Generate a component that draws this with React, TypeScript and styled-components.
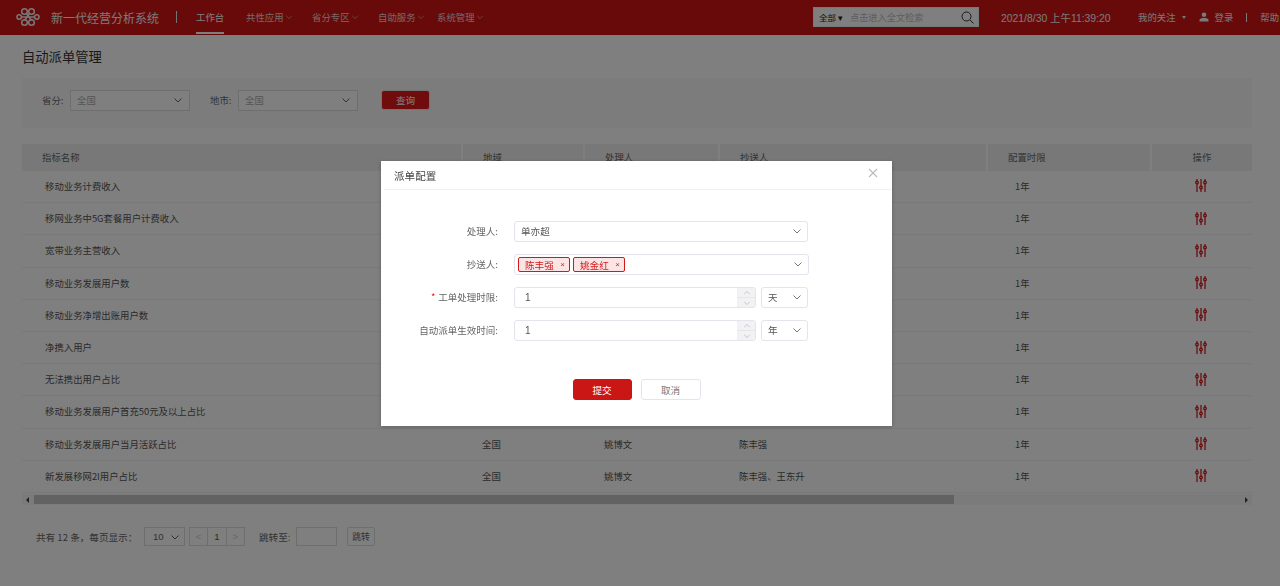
import styled, { createGlobalStyle } from 'styled-components';

const GlobalStyle = createGlobalStyle`
  html, body {
    margin: 0;
    height: 586px;
    overflow: hidden;
    background: #fff;
    font-family: "Noto Sans CJK SC", "Noto Sans", sans-serif;
    font-size: 10px;
    color: #555;
  }
  * { box-sizing: border-box; }
`;

const Header = styled.header`
  height: 35px;
  background: #d01414;
  border-bottom: 1px solid #c61212;
  display: flex;
  align-items: center;
  color: #fff;
  padding-left: 16px;
`;

const SystemName = styled.div`
  font-size: 12px;
  margin-left: 11px;
  width: 109px;
  white-space: nowrap;
  color: #f4f4f4;
`;

const HeaderDivider = styled.span`
  width: 1px;
  height: 12px;
  background: #e8e8e8;
  margin: 0 19px 0 16px;
`;

const Nav = styled.nav`
  display: flex;
  height: 100%;
  width: 617px;
`;

const NavItem = styled.a<{ $width: number; $active?: boolean }>`
  width: ${({ $width }) => $width}px;
  height: 100%;
  display: flex;
  align-items: center;
  gap: 1px;
  font-size: 9.4px;
  white-space: nowrap;
  color: ${({ $active }) => ($active ? '#fff' : '#f0d0d0')};
  position: relative;

  &::after {
    content: '';
    display: ${({ $active }) => ($active ? 'block' : 'none')};
    position: absolute;
    left: 0;
    top: 32px;
    width: 28px;
    height: 2px;
    background: #fff;
  }
`;

const SearchBox = styled.div`
  width: 166px;
  height: 20px;
  background: #fff;
  border: 1px solid #e4f4f4;
  display: flex;
  align-items: center;
  padding: 0 4px 0 5px;
  font-size: 8.5px;
  color: #222;
`;

const SearchScope = styled.span`
  width: 31px;
  white-space: nowrap;
`;

const SearchHint = styled.span`
  flex: 1;
  font-size: 9.2px;
  color: #bbb;
  white-space: nowrap;
`;

const Clock = styled.div`
  margin-left: 22px;
  width: 137px;
  font-family: "Liberation Sans", "Noto Sans CJK SC", sans-serif;
  font-size: 10.4px;
  white-space: nowrap;
  color: #f4f4f4;
`;

const HeaderLink = styled.span<{ $gap?: number }>`
  margin-left: ${({ $gap }) => $gap ?? 0}px;
  font-size: 9.4px;
  white-space: nowrap;
  color: #f4f4f4;
`;

const Caret = styled.span`
  width: 0;
  height: 0;
  margin: 0 13px 0 6px;
  border-left: 2.5px solid transparent;
  border-right: 2.5px solid transparent;
  border-top: 3px solid #f0f0f0;
`;

const LinkSeparator = styled.span`
  width: 1px;
  height: 9px;
  background: #f4f4f4;
  margin: 0 13px 0 13px;
`;

const Main = styled.main`
  padding: 0 27px 0 22px;
`;

const PageTitle = styled.h1`
  margin: 0;
  height: 43px;
  padding-bottom: 1px;
  display: flex;
  align-items: center;
  font-size: 13.3px;
  font-weight: 400;
  color: #333;
`;

const FilterPanel = styled.section`
  height: 50px;
  width: 1230px;
  background: #f8f8f8;
  display: flex;
  align-items: center;
  padding: 0 0 6px 20px;
`;

const FilterLabel = styled.label`
  width: 28px;
  font-size: 9.4px;
  color: #666;
  white-space: nowrap;
`;

const FilterSelect = styled.div`
  width: 120px;
  height: 21px;
  margin-right: 20px;
  border: 1px solid #ddd;
  background: #fff;
  display: flex;
  align-items: center;
  justify-content: space-between;
  padding: 0 6px;
  font-size: 9.4px;
  color: #aaa;
`;

const QueryButton = styled.button`
  width: 49px;
  height: 20px;
  margin-left: 3px;
  border: 1px solid #e6e6e6;
  border-radius: 3px;
  background: #e01818;
  color: #fff;
  font: inherit;
  font-size: 9.6px;
  padding: 0;
`;

const TableWrap = styled.div`
  width: 1230px;
  margin-top: 16px;
`;

const Table = styled.table`
  width: 1230px;
  border-collapse: collapse;
  table-layout: fixed;
`;

const HeadCell = styled.th<{ $center?: boolean }>`
  height: 26.5px;
  padding: 0 0 1px ${({ $center }) => ($center ? 0 : 20)}px;
  background: #f0f0f0;
  border-right: 2px solid #fff;
  font-size: 9.4px;
  font-weight: 400;
  color: #666;
  text-align: ${({ $center }) => ($center ? 'center' : 'left')};

  &:last-child { border-right: 0; }
`;

const Cell = styled.td<{ $indent?: number }>`
  height: 32.2px;
  padding: 0 0 1px ${({ $indent }) => $indent ?? 20}px;
  border-bottom: 1px solid #f2f2f2;
  font-size: 9.4px;
  color: #555;
  white-space: nowrap;
`;

const ActionCell = styled.td`
  height: 32.2px;
  padding: 0 2px 1px 0;
  border-bottom: 1px solid #f2f2f2;

  svg { display: block; margin: 0 auto; }
`;

const ScrollBar = styled.div`
  height: 11px;
  margin-top: 1.5px;
  background: #f6f6f6;
  display: flex;
  align-items: center;
  justify-content: space-between;
`;

const ScrollArrow = styled.span<{ $right?: boolean }>`
  width: 11px;
  display: flex;
  justify-content: center;

  &::before {
    content: '';
    border-top: 3px solid transparent;
    border-bottom: 3px solid transparent;
    ${({ $right }) =>
      $right ? 'border-left: 3px solid #444;' : 'border-right: 3px solid #444;'}
  }
`;

const ScrollThumb = styled.span`
  width: 920px;
  height: 9px;
  background: #c4c4c4;
  margin-right: 286px;
`;

const Pagination = styled.div`
  display: flex;
  align-items: center;
  margin-top: 22px;
  padding-left: 14px;
  font-size: 9.6px;
  color: #666;
`;

const PageText = styled.span<{ $width: number }>`
  width: ${({ $width }) => $width}px;
  white-space: nowrap;
`;

const SizeSelect = styled.div`
  width: 41px;
  height: 19px;
  border: 1px solid #ddd;
  display: flex;
  align-items: center;
  justify-content: space-between;
  padding: 0 4px 0 8px;
  margin-right: 4px;
  font-family: "Liberation Sans", sans-serif;
`;

const Pager = styled.div`
  display: flex;
  width: 56px;
  height: 19px;
  border: 1px solid #ddd;
  margin-right: 14px;
`;

const PagerCell = styled.span<{ $muted?: boolean }>`
  flex: 1;
  display: flex;
  align-items: center;
  justify-content: center;
  border-right: 1px solid #ddd;
  color: ${({ $muted }) => ($muted ? '#ccc' : '#555')};
  font-family: "Liberation Sans", sans-serif;

  &:last-child { border-right: 0; }
`;

const JumpInput = styled.div`
  width: 41px;
  height: 19px;
  border: 1px solid #ddd;
  margin: 0 10px 0 4px;
`;

const JumpButton = styled.div`
  width: 28px;
  height: 19px;
  border: 1px solid #ddd;
  border-radius: 2px;
  display: flex;
  align-items: center;
  justify-content: center;
  font-size: 8.8px;
`;

const Overlay = styled.div`
  position: fixed;
  inset: 0;
  background: rgba(0, 0, 0, 0.5);
`;

const Modal = styled.div`
  position: fixed;
  left: 381px;
  top: 161px;
  width: 511px;
  height: 265px;
  background: #fff;
  box-shadow: 0 1px 4px rgba(0, 0, 0, 0.25);
`;

const ModalHeader = styled.div`
  height: 29px;
  margin: 0 1px 0 3px;
  padding: 0 0 0 10px;
  border-bottom: 1px solid #eef0f5;
  display: flex;
  align-items: center;
  justify-content: space-between;
  font-size: 10.6px;
  color: #444;
`;

const CloseIcon = styled.span`
  display: flex;
  margin: -5px 13px 0 0;
`;

const Form = styled.div`
  display: flex;
  flex-direction: column;
  gap: 12px;
  padding-top: 31px;
`;

const FormRow = styled.div`
  display: flex;
  align-items: center;
  height: 21px;
`;

const FormLabel = styled.label`
  width: 117px;
  margin-right: 16px;
  padding-bottom: 1px;
  text-align: right;
  font-size: 9.5px;
  color: #666;
  white-space: nowrap;
`;

const Required = styled.span`
  color: #e01818;
  margin-right: 3px;
`;

const Field = styled.div<{ $width: number }>`
  width: ${({ $width }) => $width}px;
  height: 21px;
  border: 1px solid #e3e4ec;
  border-radius: 3px;
  display: flex;
  align-items: center;
  justify-content: space-between;
  padding: 0 5px 1px 6px;
  font-size: 9.6px;
  color: #555;
`;

const Tags = styled.div`
  display: flex;
  gap: 3px;
  margin: 1px 0 0 -3px;
`;

const Tag = styled.span`
  width: 52px;
  height: 15.5px;
  display: flex;
  align-items: center;
  justify-content: space-between;
  padding: 0 4px 0 6px;
  border: 1px solid #cf1a1a;
  border-radius: 2px;
  background: #fce4e4;
  color: #cf1a1a;
  font-size: 9.6px;
  white-space: nowrap;
`;

const TagClose = styled.span`
  font-family: "Liberation Sans", sans-serif;
  font-size: 8px;
  color: #b03030;
`;

const NumberField = styled.div`
  width: 242px;
  height: 21px;
  border: 1px solid #e3e4ec;
  border-radius: 3px;
  display: flex;
  align-items: center;
  justify-content: space-between;
  padding-left: 10px;
  margin-right: 5px;
  font-family: "Liberation Sans", sans-serif;
  font-size: 10px;
  color: #555;
  overflow: hidden;
`;

const Stepper = styled.div`
  width: 18px;
  height: 100%;
  display: flex;
  flex-direction: column;
  border-left: 1px solid #f0f0f3;
`;

const StepButton = styled.span`
  flex: 1;
  display: flex;
  align-items: center;
  justify-content: center;
  background: #f2f2f4;

  &:first-child { border-bottom: 1px solid #e6e6ea; }
`;

const ModalActions = styled.div`
  display: flex;
  justify-content: center;
  gap: 9px;
  margin-top: 38px;
`;

const ActionButton = styled.button<{ $primary?: boolean }>`
  width: ${({ $primary }) => ($primary ? 59 : 60)}px;
  height: 21px;
  padding: 0;
  border-radius: 3px;
  border: 1px solid ${({ $primary }) => ($primary ? '#c91515' : '#e3e4ec')};
  background: ${({ $primary }) => ($primary ? '#cb1616' : '#fff')};
  color: ${({ $primary }) => ($primary ? '#fff' : '#777')};
  font: inherit;
  font-size: 9.6px;
`;

const Chevron = ({ size = 10, color = '#777', up = false }: { size?: number; color?: string; up?: boolean }) => (
  <svg width={size} height={size} viewBox="0 0 10 10" fill="none">
    <path d={up ? 'M1.5 6.5 5 3l3.5 3.5' : 'M1.5 3.5 5 7l3.5-3.5'} stroke={color} strokeWidth="1" />
  </svg>
);

const SlidersIcon = () => (
  <svg width="12" height="13" viewBox="0 0 12 13" fill="none" stroke="#d01010" strokeWidth="1.2">
    <path d="M2 0v13M6 0v13M10 0v13" />
    <circle cx="2" cy="3.5" r="1.3" fill="#f5e8e8" />
    <circle cx="6" cy="8.5" r="1.3" fill="#f5e8e8" />
    <circle cx="10" cy="3.5" r="1.3" fill="#f5e8e8" />
  </svg>
);

const UnicomLogo = () => (
  <svg width="24" height="20" viewBox="0 0 24 20" fill="none" stroke="#f4f0f0" strokeWidth="1.5">
    <circle cx="3.2" cy="10" r="2.2" />
    <circle cx="20.8" cy="10" r="2.2" />
    <circle cx="8.5" cy="4.5" r="2.8" />
    <circle cx="15.5" cy="4.5" r="2.8" />
    <circle cx="8.5" cy="15.5" r="2.8" />
    <circle cx="15.5" cy="15.5" r="2.8" />
    <path d="M5.5 10h13M10.5 6.5l5 7M13.5 6.5l-5 7" />
  </svg>
);

const SearchIcon = () => (
  <svg width="13" height="13" viewBox="0 0 13 13" fill="none" stroke="#333" strokeWidth="1">
    <circle cx="5.5" cy="5.5" r="4.5" />
    <path d="M9 9l3.5 3.5" />
  </svg>
);

const UserIcon = () => (
  <svg width="10" height="10" viewBox="0 0 10 10" fill="#f4f4f4">
    <circle cx="5" cy="2.8" r="2.3" />
    <path d="M0.5 9.5V8c0-1 1.6-1.5 3-1.9h3c1.4.4 3 .9 3 1.9v1.5z" />
  </svg>
);

const navItems = [
  { label: '工作台', width: 50, active: true },
  { label: '共性应用', width: 66, chevron: true },
  { label: '省分专区', width: 66, chevron: true },
  { label: '自助服务', width: 59, chevron: true },
  { label: '系统管理', width: 80, chevron: true },
];

// rows 1-8 sit behind the dialog, only their name, limit and action cells show
const rows = [
  ['移动业务计费收入'],
  ['移网业务中5G套餐用户计费收入'],
  ['宽带业务主营收入'],
  ['移动业务发展用户数'],
  ['移动业务净增出账用户数'],
  ['净携入用户'],
  ['无法携出用户占比'],
  ['移动业务发展用户首充50元及以上占比'],
  ['移动业务发展用户当月活跃占比', '全国', '姚博文', '陈丰强'],
  ['新发展移网2I用户占比', '全国', '姚博文', '陈丰强、王东升'],
];

const columns = [440, 122, 135, 268, 164, 101];

const App = () => (
  <>
    <GlobalStyle />
    <Header>
      <UnicomLogo />
      <SystemName>新一代经营分析系统</SystemName>
      <HeaderDivider />
      <Nav>
        {navItems.map((item) => (
          <NavItem key={item.label} $width={item.width} $active={item.active}>
            {item.label}
            {item.chevron && <Chevron size={8} color="#e0a0a0" />}
          </NavItem>
        ))}
      </Nav>
      <SearchBox>
        <SearchScope>全部 ▾</SearchScope>
        <SearchHint>点击进入全文检索</SearchHint>
        <SearchIcon />
      </SearchBox>
      <Clock>2021/8/30 上午11:39:20</Clock>
      <HeaderLink>我的关注</HeaderLink>
      <Caret />
      <UserIcon />
      <HeaderLink $gap={6}>登录</HeaderLink>
      <LinkSeparator />
      <HeaderLink>帮助</HeaderLink>
    </Header>
    <Main>
      <PageTitle>自动派单管理</PageTitle>
      <FilterPanel>
        <FilterLabel>省分:</FilterLabel>
        <FilterSelect>
          全国
          <Chevron color="#666" />
        </FilterSelect>
        <FilterLabel>地市:</FilterLabel>
        <FilterSelect>
          全国
          <Chevron color="#666" />
        </FilterSelect>
        <QueryButton>查询</QueryButton>
      </FilterPanel>
      <TableWrap>
        <Table>
          <colgroup>
            {columns.map((width, index) => (
              <col key={index} width={width} />
            ))}
          </colgroup>
          <thead>
            <tr>
              <HeadCell>指标名称</HeadCell>
              <HeadCell>地域</HeadCell>
              <HeadCell>处理人</HeadCell>
              <HeadCell>抄送人</HeadCell>
              <HeadCell>配置时限</HeadCell>
              <HeadCell $center>操作</HeadCell>
            </tr>
          </thead>
          <tbody>
            {rows.map((row) => (
              <tr key={row[0]}>
                <Cell $indent={23}>{row[0]}</Cell>
                <Cell>{row[1]}</Cell>
                <Cell>{row[2]}</Cell>
                <Cell>{row[3]}</Cell>
                <Cell $indent={28}>1年</Cell>
                <ActionCell>
                  <SlidersIcon />
                </ActionCell>
              </tr>
            ))}
          </tbody>
        </Table>
        <ScrollBar>
          <ScrollArrow />
          <ScrollThumb />
          <ScrollArrow $right />
        </ScrollBar>
      </TableWrap>
      <Pagination>
        <PageText $width={108}>共有 12 条，每页显示：</PageText>
        <SizeSelect>
          10
          <Chevron color="#666" />
        </SizeSelect>
        <Pager>
          <PagerCell $muted>&lt;</PagerCell>
          <PagerCell>1</PagerCell>
          <PagerCell $muted>&gt;</PagerCell>
        </Pager>
        <PageText $width={33}>跳转至:</PageText>
        <JumpInput />
        <JumpButton>跳转</JumpButton>
      </Pagination>
    </Main>
    <Overlay />
    <Modal>
      <ModalHeader>
        派单配置
        <CloseIcon>
          <svg width="10" height="10" viewBox="0 0 10 10" stroke="#bbb" strokeWidth="1.1">
            <path d="M1 1l8 8M9 1 1 9" />
          </svg>
        </CloseIcon>
      </ModalHeader>
      <Form>
        <FormRow>
          <FormLabel>处理人:</FormLabel>
          <Field $width={294}>
            单亦超
            <Chevron />
          </Field>
        </FormRow>
        <FormRow>
          <FormLabel>抄送人:</FormLabel>
          <Field $width={295}>
            <Tags>
              <Tag>
                陈丰强<TagClose>×</TagClose>
              </Tag>
              <Tag>
                姚金红<TagClose>×</TagClose>
              </Tag>
            </Tags>
            <Chevron />
          </Field>
        </FormRow>
        <FormRow>
          <FormLabel>
            <Required>*</Required>工单处理时限:
          </FormLabel>
          <NumberField>
            1
            <Stepper>
              <StepButton>
                <Chevron size={8} color="#bbb" up />
              </StepButton>
              <StepButton>
                <Chevron size={8} color="#bbb" />
              </StepButton>
            </Stepper>
          </NumberField>
          <Field $width={47}>
            天
            <Chevron />
          </Field>
        </FormRow>
        <FormRow>
          <FormLabel>自动派单生效时间:</FormLabel>
          <NumberField>
            1
            <Stepper>
              <StepButton>
                <Chevron size={8} color="#bbb" up />
              </StepButton>
              <StepButton>
                <Chevron size={8} color="#bbb" />
              </StepButton>
            </Stepper>
          </NumberField>
          <Field $width={47}>
            年
            <Chevron />
          </Field>
        </FormRow>
      </Form>
      <ModalActions>
        <ActionButton $primary>提交</ActionButton>
        <ActionButton>取消</ActionButton>
      </ModalActions>
    </Modal>
  </>
);

export default App;
